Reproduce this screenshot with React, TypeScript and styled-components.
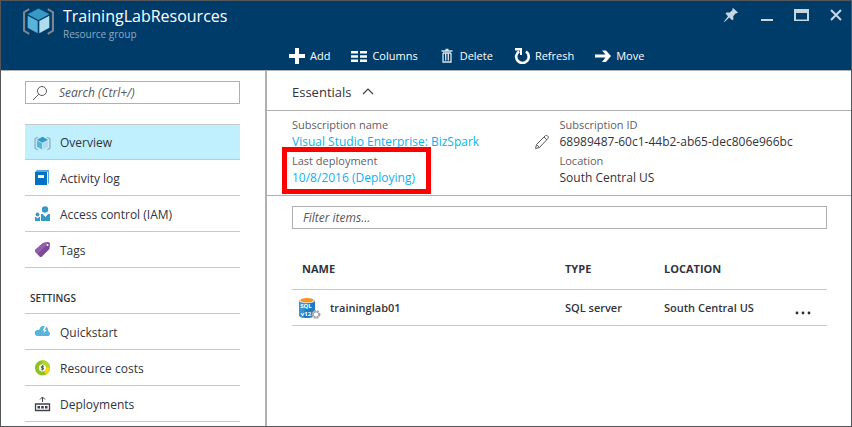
import React from "react";
import styled, { createGlobalStyle, css } from "styled-components";

const color = {
  header: "#003c6a",
  frame: "#55565a",
  line: "#b0b0b0",
  softLine: "#c8c8c8",
  text: "#32343c",
  muted: "#5f6066",
  link: "#0cb2ee",
  selected: "#c0effd",
  control: "#c7d5e0",
};

const GlobalStyle = createGlobalStyle`
  *, *::before, *::after { box-sizing: border-box; }
  body {
    margin: 0;
    background: #fff;
    color: ${color.text};
    font: 12px/16px "Open Sans", "Noto Sans", sans-serif;
  }
  button, input { font: inherit; color: inherit; }
  svg { display: block; flex: none; }
`;

const Blade = styled.div`
  display: flex;
  flex-direction: column;
  min-height: 100vh;
  border: 1px solid ${color.frame};
`;

const Header = styled.header`
  display: flex;
  flex-direction: column;
  justify-content: space-between;
  height: 70px;
  background: ${color.header};
  border-bottom: 1px solid ${color.line};
  color: #fff;
`;

const TitleBar = styled.div`
  display: flex;
  justify-content: space-between;
  padding: 4px 7px 0 21px;
`;

const Identity = styled.div`
  display: flex;
  gap: 8px;
`;

const Title = styled.h1`
  margin: 0;
  font-size: 16px;
  line-height: 22px;
  font-weight: 400;
`;

const Subtitle = styled.p`
  margin: 0;
  font-size: 10px;
  line-height: 14px;
  color: #8fa9c0;
`;

const WindowControls = styled.div`
  display: flex;
  gap: 19px;
  padding-top: 2px;
  color: ${color.control};
`;

const PlainButton = styled.button`
  display: flex;
  align-items: center;
  padding: 0;
  border: 0;
  background: none;
  cursor: pointer;
`;

const WindowButton = styled(PlainButton)`
  height: 16px;
`;

const Toolbar = styled.div`
  display: flex;
  gap: 21px;
  padding: 0 0 6px 288px;
`;

const ToolButton = styled(PlainButton)`
  gap: 5px;
  font-size: 11px;
`;

const Body = styled.div`
  display: flex;
  flex: 1;
`;

const Sidebar = styled.aside`
  flex: none;
  width: 266px;
  padding: 10px 25px 0 24px;
  border-right: 2px solid ${color.line};
`;

const SearchBox = styled.label`
  display: flex;
  align-items: center;
  gap: 11px;
  height: 23px;
  padding: 0 6px;
  border: 1px solid ${color.line};
`;

const TextInput = styled.input`
  flex: 1;
  min-width: 0;
  padding: 0;
  border: 0;
  outline: 0;
  background: none;
  font-style: italic;
  &::placeholder { color: #55565c; opacity: 1; }
`;

const NavList = styled.ul`
  margin: 0;
  padding: 0;
  list-style: none;
  border-top: 1px solid ${color.softLine};
`;

const MainNav = styled(NavList)`
  margin-top: 20px;
`;

const NavLink = styled.a<{ $selected?: boolean }>`
  display: flex;
  align-items: center;
  gap: 9px;
  height: 36px;
  padding: 2px 9px 0;
  border-bottom: 1px solid ${color.softLine};
  color: inherit;
  text-decoration: none;
  ${(p) => p.$selected && css`
    height: 35px;
    background: ${color.selected};
  `}
`;

const SectionTitle = styled.h2`
  margin: 22px 0 7px 5px;
  font-size: 10px;
  line-height: 16px;
  font-weight: 600;
`;

const Main = styled.main`
  flex: 1;
  min-width: 0;
`;

const EssentialsToggle = styled(PlainButton)`
  gap: 10px;
  height: 39px;
  padding: 3px 25px 0;
  font-size: 13px;
`;

const Essentials = styled.dl`
  display: grid;
  grid-template-columns: 1fr 1fr;
  margin: 0;
  padding: 5px 24px 7px 25px;
  border: solid ${color.line};
  border-width: 1px 0;
`;

const Field = styled.div<{ $highlighted?: boolean }>`
  position: relative;
  height: 36px;
  padding-top: 1px;
  ${(p) => p.$highlighted && css`
    &::after {
      content: "";
      position: absolute;
      top: -5px;
      left: -10px;
      width: 149px;
      height: 47px;
      border: 5px solid #fe0000;
      pointer-events: none;
    }
  `}
`;

const FieldName = styled.dt`
  font-size: 11px;
  line-height: 16px;
  color: ${color.muted};
`;

const FieldValue = styled.dd`
  display: flex;
  justify-content: space-between;
  margin: 0;
  padding-right: 10px;
  line-height: 17px;
`;

const ValueLink = styled.a`
  color: ${color.link};
  text-decoration: none;
`;

const Resources = styled.section`
  padding: 10px 24px 0 25px;
`;

const FilterInput = styled(TextInput)`
  display: block;
  width: 100%;
  height: 23px;
  padding: 0 10px;
  border: 1px solid ${color.line};
`;

const Table = styled.table`
  width: 100%;
  margin-top: 24px;
  table-layout: fixed;
  border-collapse: separate;
  border-spacing: 0;
  font-size: 11px;
`;

const HeadCell = styled.th<{ $width?: string }>`
  width: ${(p) => p.$width ?? "auto"};
  height: 37px;
  padding: 0 0 4px;
  border-bottom: 1px solid ${color.softLine};
  font-weight: 700;
  text-align: left;
  &:first-child { padding-left: 10px; }
`;

const Cell = styled.td`
  height: 36px;
  padding: 1px 0 0;
  border-bottom: 1px solid ${color.softLine};
  font-weight: 600;
`;

const ResourceName = styled.div`
  display: flex;
  align-items: center;
  gap: 9px;
  padding-left: 6px;
`;

const MoreButton = styled(PlainButton)`
  padding: 9px 7px 0;
`;

function CubeIcon({ size, large }: { size: number; large?: boolean }) {
  const bracket = large ? "#82878c" : "#8aa0aa";
  return (
    <svg width={size} height={size} viewBox="0 0 32 32" aria-hidden="true">
      <path d="M7 4L2 7v18l5 3M25 4l5 3v18l-5 3" fill="none" stroke={bracket} strokeWidth="2" />
      <path d="M16 3.500l10.500 5.500L16 14.500 5.500 9z" fill="#3999c6" />
      <path d="M5.500 10.500l9.700 5v12l-9.700-5.500z" fill="#59b4d9" />
      <path d="M26.500 10.500l-9.700 5v12l9.700-5.500z" fill="#b0dcee" />
    </svg>
  );
}

const windowIcons: [string, React.ReactNode][] = [
  ["Pin", <path key="p" d="M10 1l5 4.500-1.200.8-1-.1-2.600 3 .2 3.200-1.300.9-2.800-2.800L1.500 15l-.5-.5L5 9.200 2.500 6.600l1-1.200 3.200.1L9.500 3 9.200 2z" fill="currentColor" />],
  ["Minimize", <path key="m" d="M3 12h12v2H3z" fill="currentColor" />],
  ["Maximize", <path key="x" d="M1 2h15v12H1zM3 6v6.500h11V6z" fillRule="evenodd" fill="currentColor" />],
  ["Close", <path key="c" d="M3 3l10 10M13 3L3 13" stroke="currentColor" strokeWidth="2" />],
];

const tools: [string, React.ReactNode][] = [
  ["Add", <path key="a" d="M6 0h4v6h6v4h-6v6H6v-6H0V6h6z" fill="#fff" />],
  ["Columns", <path key="c" d="M0 3h7v2.500H0zM9 3h7v2.500H9zM0 7.200h7v2.500H0zM9 7.200h7v2.500H9zM0 11.400h7V14H0zM9 11.400h7V14H9z" fill="#fff" />],
  ["Delete", <path key="d" d="M2.500 3h11M6.500 1.500h3M4 5v9h8V5M6.700 5v7.500M9.300 5v7.500M4 5h8" fill="none" stroke="#dce5ee" strokeWidth="1.300" />],
  ["Refresh", <g key="r"><path d="M5.200 3.300A6.300 6.300 0 1 0 12 3.500" fill="none" stroke="#fff" strokeWidth="2.600" /><path d="M1 0h7v7H6V2.500H1z" fill="#fff" /></g>],
  ["Move", <path key="m" d="M0 6.500h10.500L7 2.500h4L16 8l-5 6H7l3.500-4.500H0z" fill="#fff" />],
];

const mainItems: [string, React.ReactNode][] = [
  ["Overview", <CubeIcon key="o" size={17} />],
  ["Activity log", (
    <svg key="a" width="17" height="17" viewBox="0 0 17 17" aria-hidden="true">
      <path d="M3 0h12v13l-1 1V2H1z" fill="#59a7dc" /><path d="M1 2h12v13H1z" fill="#0072c6" /><path d="M4 5h6v3H4z" fill="#fff" />
    </svg>
  )],
  ["Access control (IAM)", (
    <svg key="i" width="17" height="17" viewBox="0 0 17 17" fill="#3999c6" aria-hidden="true">
      <circle cx="11" cy="3.500" r="3.200" /><path d="M7 15V8h1.500l3 3 2.500-3h2v7z" /><circle cx="3.500" cy="8.500" r="1.900" /><path d="M1 15v-4h1l1.500 1.500L5 11h1v4z" />
    </svg>
  )],
  ["Tags", (
    <svg key="t" width="17" height="17" viewBox="0 0 17 17" aria-hidden="true">
      <path d="M9 1l5-1 2 1-.5 6-8 8H6L1 9.500V8z" fill="#804998" /><path d="M9 1l5-1 1 1L3.500 12 1 9.500V8z" fill="#925fab" /><circle cx="13.500" cy="3" r="1" fill="#fff" />
    </svg>
  )],
];

const settingsItems: [string, React.ReactNode][] = [
  ["Quickstart", (
    <svg key="q" width="17" height="17" viewBox="0 0 17 17" aria-hidden="true">
      <path d="M4 12a3 3 0 0 1-.5-6C5 6 5.500 5.500 6 4c1-2 3.500-2.500 5-1.500 2 0 3 1.500 3 3.500.500 2 2 2 2 4 0 1-1 2-2 2z" fill="#59b4d9" />
      <path d="M11 2L8.500 6.500h2L9.500 9.500 12.500 6h-1.700L12.500 2z" fill="#fff" />
    </svg>
  )],
  ["Resource costs", (
    <svg key="r" width="17" height="17" viewBox="0 0 17 17" aria-hidden="true">
      <circle cx="8.500" cy="7.800" r="5.600" fill="none" stroke="#8dc41f" strokeWidth="4" />
      <path d="M8.500 2.200A5.600 5.600 0 0 1 14.100 7.500" fill="none" stroke="#b6d531" strokeWidth="4" />
      <path d="M14.100 7.500a5.600 5.600 0 0 1-3 5.200" fill="none" stroke="#fcd116" strokeWidth="4" />
      <path d="M10 6.300H7.500v1.500h2v1.500H7M8.500 5v5.500" fill="none" stroke="#4e584c" strokeWidth=".9" />
    </svg>
  )],
  ["Deployments", (
    <svg key="d" width="17" height="17" viewBox="0 0 17 17" aria-hidden="true">
      <path d="M8.500 6V1M6 3.500L8.500 1 11 3.500" fill="none" stroke="#3e4148" />
      <path d="M1.500 8h14v6.500h-14z" fill="none" stroke="#3e4148" strokeWidth="1.300" />
      <path d="M3.500 10h2.500v2.500H3.500zM7.200 10h2.600v2.500H7.200zM11 10h2.500v2.500H11z" fill="#3e4148" />
    </svg>
  )],
];

function SqlIcon() {
  return (
    <svg width="23" height="22" viewBox="0 0 23 22" aria-hidden="true">
      <path d="M1 3v15c0 2 3.500 3 8 3s8-1 8-3V3z" fill="#1e7cc5" />
      <path d="M1 3v15c0 1.500 2 2.500 4 2.800L9 3z" fill="#3c91d2" />
      <ellipse cx="9" cy="3.500" rx="8" ry="2.800" fill="#e3ecf2" />
      <ellipse cx="9" cy="3.300" rx="6.700" ry="2.200" fill="#f7941e" />
      <circle cx="18" cy="17.500" r="3.700" fill="#fff" stroke="#a3a5a8" strokeWidth="1.500" strokeDasharray="2 1" />
      <circle cx="18" cy="17.500" r="2.700" fill="#fff" stroke="#929497" />
      <text x="8" y="11" fill="#fff" fontSize="6" fontWeight="700" textAnchor="middle">SQL</text>
      <text x="8" y="19" fill="#fff" fontSize="6" fontWeight="700" textAnchor="middle">v12</text>
    </svg>
  );
}

function Nav({ items, selected }: { items: [string, React.ReactNode][]; selected?: string }) {
  return (
    <>
      {items.map(([label, icon]) => (
        <li key={label}>
          <NavLink href="#" $selected={label === selected} aria-current={label === selected ? "page" : undefined}>
            {icon}
            {label}
          </NavLink>
        </li>
      ))}
    </>
  );
}

export default function App() {
  return (
    <Blade>
      <GlobalStyle />
      <Header>
        <TitleBar>
          <Identity>
            <CubeIcon size={33} large />
            <div>
              <Title>TrainingLabResources</Title>
              <Subtitle>Resource group</Subtitle>
            </div>
          </Identity>
          <WindowControls>
            {windowIcons.map(([label, shape]) => (
              <WindowButton key={label} type="button" aria-label={label}>
                <svg width="16" height="16" viewBox="0 0 16 16">{shape}</svg>
              </WindowButton>
            ))}
          </WindowControls>
        </TitleBar>
        <Toolbar>
          {tools.map(([label, shape]) => (
            <ToolButton key={label} type="button">
              <svg width="16" height="16" viewBox="0 0 16 16" aria-hidden="true">{shape}</svg>
              {label}
            </ToolButton>
          ))}
        </Toolbar>
      </Header>
      <Body>
        <Sidebar>
          <SearchBox>
            <svg width="16" height="16" viewBox="0 0 16 16" fill="none" stroke="#5a5b60" aria-hidden="true">
              <circle cx="10" cy="6" r="4.500" /><path d="M6.800 9.200L1 15" />
            </svg>
            <TextInput type="text" aria-label="Search" placeholder="Search (Ctrl+/)" />
          </SearchBox>
          <nav>
            <MainNav><Nav items={mainItems} selected="Overview" /></MainNav>
            <SectionTitle>SETTINGS</SectionTitle>
            <NavList><Nav items={settingsItems} /></NavList>
          </nav>
        </Sidebar>
        <Main>
          <EssentialsToggle type="button" aria-expanded="true">
            Essentials
            <svg width="12" height="12" viewBox="0 0 12 12" aria-hidden="true">
              <path d="M1 8l5-5 5 5" fill="none" stroke="#3e4148" strokeWidth="1.200" />
            </svg>
          </EssentialsToggle>
          <Essentials>
            <Field>
              <FieldName>Subscription name</FieldName>
              <FieldValue>
                <ValueLink href="#">Visual Studio Enterprise: BizSpark</ValueLink>
                <PlainButton type="button" aria-label="Edit subscription">
                  <svg width="16" height="16" viewBox="0 0 16 16" fill="none" stroke="#5a5b60" aria-hidden="true">
                    <path d="M1.500 14.500l1-4 8.500-8.500c1-1 2-.7 2.700 0s1 1.700 0 2.700L5.500 13.500zM10 3l3 3M2.500 10.500l3 3" />
                  </svg>
                </PlainButton>
              </FieldValue>
            </Field>
            <Field>
              <FieldName>Subscription ID</FieldName>
              <FieldValue>68989487-60c1-44b2-ab65-dec806e966bc</FieldValue>
            </Field>
            <Field $highlighted>
              <FieldName>Last deployment</FieldName>
              <FieldValue><ValueLink href="#">10/8/2016 (Deploying)</ValueLink></FieldValue>
            </Field>
            <Field>
              <FieldName>Location</FieldName>
              <FieldValue>South Central US</FieldValue>
            </Field>
          </Essentials>
          <Resources>
            <FilterInput type="text" aria-label="Filter items" placeholder="Filter items..." />
            <Table>
              <thead>
                <tr>
                  <HeadCell scope="col">NAME</HeadCell>
                  <HeadCell scope="col" $width="99px">TYPE</HeadCell>
                  <HeadCell scope="col" $width="124px">LOCATION</HeadCell>
                  <HeadCell $width="39px" aria-label="Actions" />
                </tr>
              </thead>
              <tbody>
                <tr>
                  <Cell><ResourceName><SqlIcon />traininglab01</ResourceName></Cell>
                  <Cell>SQL server</Cell>
                  <Cell>South Central US</Cell>
                  <Cell>
                    <MoreButton type="button" aria-label="More actions">
                      <svg width="16" height="4" viewBox="0 0 16 4" fill="#2b2d33">
                        <circle cx="2" cy="2" r="1.400" /><circle cx="8" cy="2" r="1.400" /><circle cx="14" cy="2" r="1.400" />
                      </svg>
                    </MoreButton>
                  </Cell>
                </tr>
              </tbody>
            </Table>
          </Resources>
        </Main>
      </Body>
    </Blade>
  );
}
